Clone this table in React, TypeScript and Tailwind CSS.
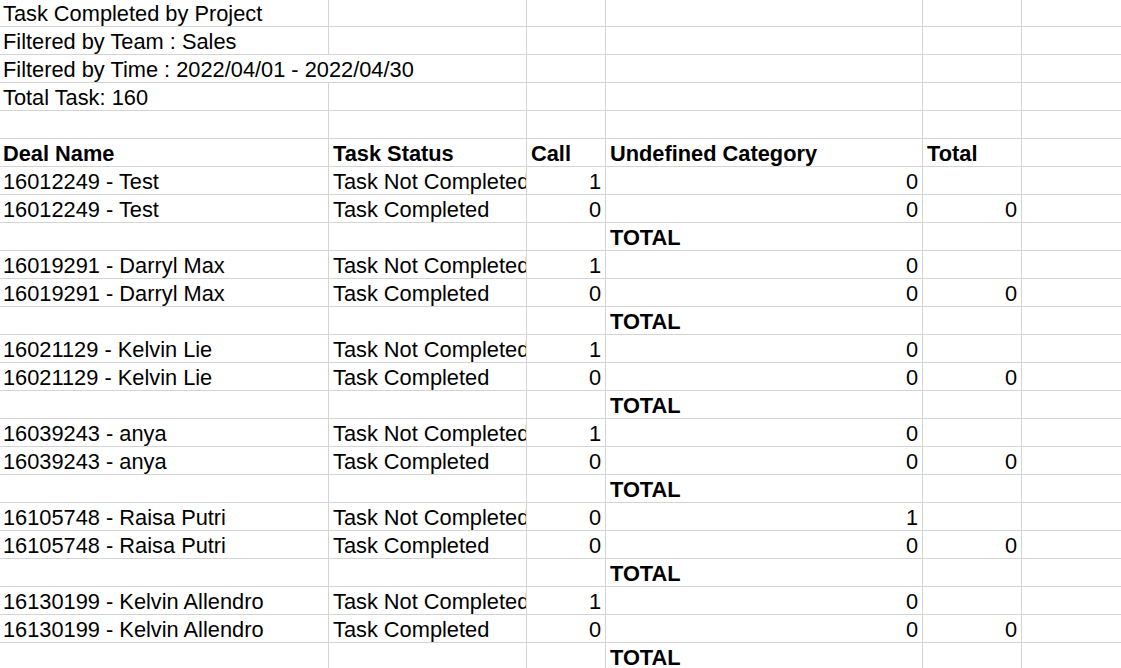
import React from "react";

type Cell = { text?: string; bold?: boolean; right?: boolean };

interface Group {
  deal: string;
  notDone: [string, string];
  done: [string, string, string];
}

const groups: Group[] = [
  { deal: "16012249 - Test", notDone: ["1", "0"], done: ["0", "0", "0"] },
  { deal: "16019291 - Darryl Max", notDone: ["1", "0"], done: ["0", "0", "0"] },
  { deal: "16021129 - Kelvin Lie", notDone: ["1", "0"], done: ["0", "0", "0"] },
  { deal: "16039243 - anya", notDone: ["1", "0"], done: ["0", "0", "0"] },
  { deal: "16105748 - Raisa Putri", notDone: ["0", "1"], done: ["0", "0", "0"] },
  { deal: "16130199 - Kelvin Allendro", notDone: ["1", "0"], done: ["0", "0", "0"] },
];

// column widths incl. the 1px grid line on the right
const widths = ["w-[329px]", "w-[198px]", "w-[79px]", "w-[317px]", "w-[99px]"];

function GridCell({
  cell,
  width,
  first,
  last,
}: {
  cell: Cell;
  width: string;
  first?: boolean;
  last?: boolean;
}) {
  return (
    <div
      className={`${last ? "flex-1" : `${width} shrink-0 border-r`} h-full border-[#d4d4d4] overflow-hidden whitespace-nowrap pt-[2px] ${
        cell.right ? "text-right pr-[4px]" : first ? "pl-[3px]" : "pl-[4px]"
      } ${cell.bold ? "font-bold" : ""}`}
    >
      {cell.text ?? ""}
    </div>
  );
}

function Row({ cells }: { cells: Cell[] }) {
  return (
    <div className="flex h-[28px] border-b border-[#d4d4d4] leading-[26px]">
      {cells.map((c, i) => (
        <GridCell key={i} cell={c} width={widths[i]} first={i === 0} />
      ))}
      <GridCell cell={{}} width="" last />
    </div>
  );
}

function TitleRow({ text, wide }: { text: string; wide?: boolean }) {
  return (
    <div className="flex h-[28px] border-b border-[#d4d4d4] leading-[26px]">
      <div
        className={`${wide ? "w-[527px]" : "w-[329px]"} shrink-0 border-r border-[#d4d4d4] pl-[3px] pt-[2px] whitespace-nowrap`}
      >
        {text}
      </div>
      {!wide && <div className="w-[198px] shrink-0 border-r border-[#d4d4d4]" />}
      <div className="w-[79px] shrink-0 border-r border-[#d4d4d4]" />
      <div className="w-[317px] shrink-0 border-r border-[#d4d4d4]" />
      <div className="w-[99px] shrink-0 border-r border-[#d4d4d4]" />
      <div className="flex-1" />
    </div>
  );
}

export default function App() {
  return (
    <div
      className="h-[668px] w-[1121px] overflow-hidden bg-white text-black text-[21.8px]"
      style={{ fontFamily: '"Liberation Sans", Arial, sans-serif' }}
    >
      <div className="-mt-px">
        <TitleRow text="Task Completed by Project" />
        <TitleRow text="Filtered by Team : Sales" />
        <TitleRow text="Filtered by Time : 2022/04/01 - 2022/04/30" wide />
        <TitleRow text="Total Task: 160" />
        <Row cells={[{}, {}, {}, {}, {}]} />
        <Row
          cells={[
            { text: "Deal Name", bold: true },
            { text: "Task Status", bold: true },
            { text: "Call", bold: true },
            { text: "Undefined Category", bold: true },
            { text: "Total", bold: true },
          ]}
        />
        {groups.map((g) => (
          <React.Fragment key={g.deal}>
            <Row
              cells={[
                { text: g.deal },
                { text: "Task Not Completed" },
                { text: g.notDone[0], right: true },
                { text: g.notDone[1], right: true },
                {},
              ]}
            />
            <Row
              cells={[
                { text: g.deal },
                { text: "Task Completed" },
                { text: g.done[0], right: true },
                { text: g.done[1], right: true },
                { text: g.done[2], right: true },
              ]}
            />
            <Row cells={[{}, {}, {}, { text: "TOTAL", bold: true }, {}]} />
          </React.Fragment>
        ))}
      </div>
    </div>
  );
}
